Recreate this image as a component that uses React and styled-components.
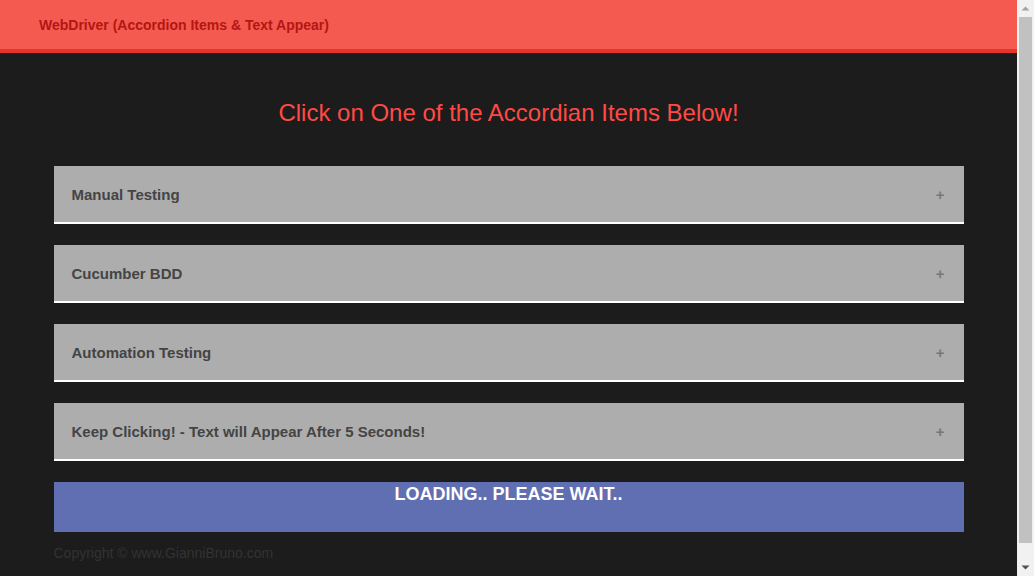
import styled, { createGlobalStyle } from 'styled-components'

const GlobalStyle = createGlobalStyle`
  html, body {
    margin: 0;
    padding: 0;
    background-color: #1c1c1c;
    font-family: "Liberation Sans", Arial, sans-serif;
  }
`;

const Shell = styled.div`
  display: flex;
  height: 100vh;
  overflow: hidden;
`;

const Page = styled.div`
  flex: 1;
  min-width: 0;
  display: flex;
  flex-direction: column;
`;

const ScrollBar = styled.div`
  width: 17px;
  flex-shrink: 0;
  background-color: #f1f1f1;
  display: flex;
  flex-direction: column;
`;

const ScrollArrow = styled.div`
  height: 17px;
  display: flex;
  align-items: center;
  justify-content: center;
`;

const ScrollTrack = styled.div`
  flex: 1;
  padding: 0 2px 16px;
  display: flex;
  flex-direction: column;
`;

const ScrollThumb = styled.div`
  flex: 1;
  background-color: #c1c1c1;
`;

const NavBar = styled.header`
  height: 49px;
  flex-shrink: 0;
  background-color: #f55a50;
  border-bottom: 4px solid #e8352b;
  display: flex;
  align-items: center;
  padding-left: 39px;
`;

const Brand = styled.span`
  color: #b31613;
  font-size: 14px;
  font-weight: bold;
`;

const Main = styled.main`
  width: 910px;
  margin: 0 auto;
  padding-top: 47px;
`;

const Title = styled.h1`
  margin: 0 0 40px;
  text-align: center;
  color: #ff4a45;
  font-size: 24px;
  font-weight: normal;
  line-height: 26px;
`;

const Item = styled.button`
  display: flex;
  align-items: center;
  justify-content: space-between;
  width: 100%;
  height: 58px;
  margin-bottom: 21px;
  padding: 1px 18px 0;
  background-color: #adadad;
  border: none;
  border-bottom: 2px solid #ffffff;
  font-family: inherit;
  cursor: pointer;
`;

const ItemLabel = styled.span`
  color: #444444;
  font-size: 15px;
  font-weight: bold;
`;

const Plus = styled.span`
  color: #777777;
  font-size: 15px;
  font-weight: bold;
  margin-right: 1px;
`;

const Loading = styled.div`
  height: 50px;
  background-color: #606eb2;
  color: #ffffff;
  text-align: center;
  font-size: 18px;
  font-weight: bold;
  line-height: 24px;
`;

const Footer = styled.p`
  margin: 13px 0 0;
  color: #333333;
  font-size: 14px;
`;

const items = [
  'Manual Testing',
  'Cucumber BDD',
  'Automation Testing',
  'Keep Clicking! - Text will Appear After 5 Seconds!',
];

const Arrow = ({ up, color }) => (
  <svg width="9" height="5" viewBox="0 0 9 5">
    <path d={up ? 'M0.5 4.5 L4.5 0.5 L8.5 4.5 Z' : 'M0.5 0.5 L4.5 4.5 L8.5 0.5 Z'} fill={color} />
  </svg>
);

export default function App() {
  return (
    <Shell>
      <GlobalStyle />
      <Page>
        <NavBar>
          <Brand>WebDriver (Accordion Items &amp; Text Appear)</Brand>
        </NavBar>
        <Main>
          <Title>Click on One of the Accordian Items Below!</Title>
          {items.map((label) => (
            <Item key={label}>
              <ItemLabel>{label}</ItemLabel>
              <Plus>+</Plus>
            </Item>
          ))}
          <Loading>LOADING.. PLEASE WAIT..</Loading>
          <Footer>Copyright © www.GianniBruno.com</Footer>
        </Main>
      </Page>
      <ScrollBar>
        <ScrollArrow>
          <Arrow up color="#a3a3a3" />
        </ScrollArrow>
        <ScrollTrack>
          <ScrollThumb />
        </ScrollTrack>
        <ScrollArrow>
          <Arrow color="#505050" />
        </ScrollArrow>
      </ScrollBar>
    </Shell>
  )
}
